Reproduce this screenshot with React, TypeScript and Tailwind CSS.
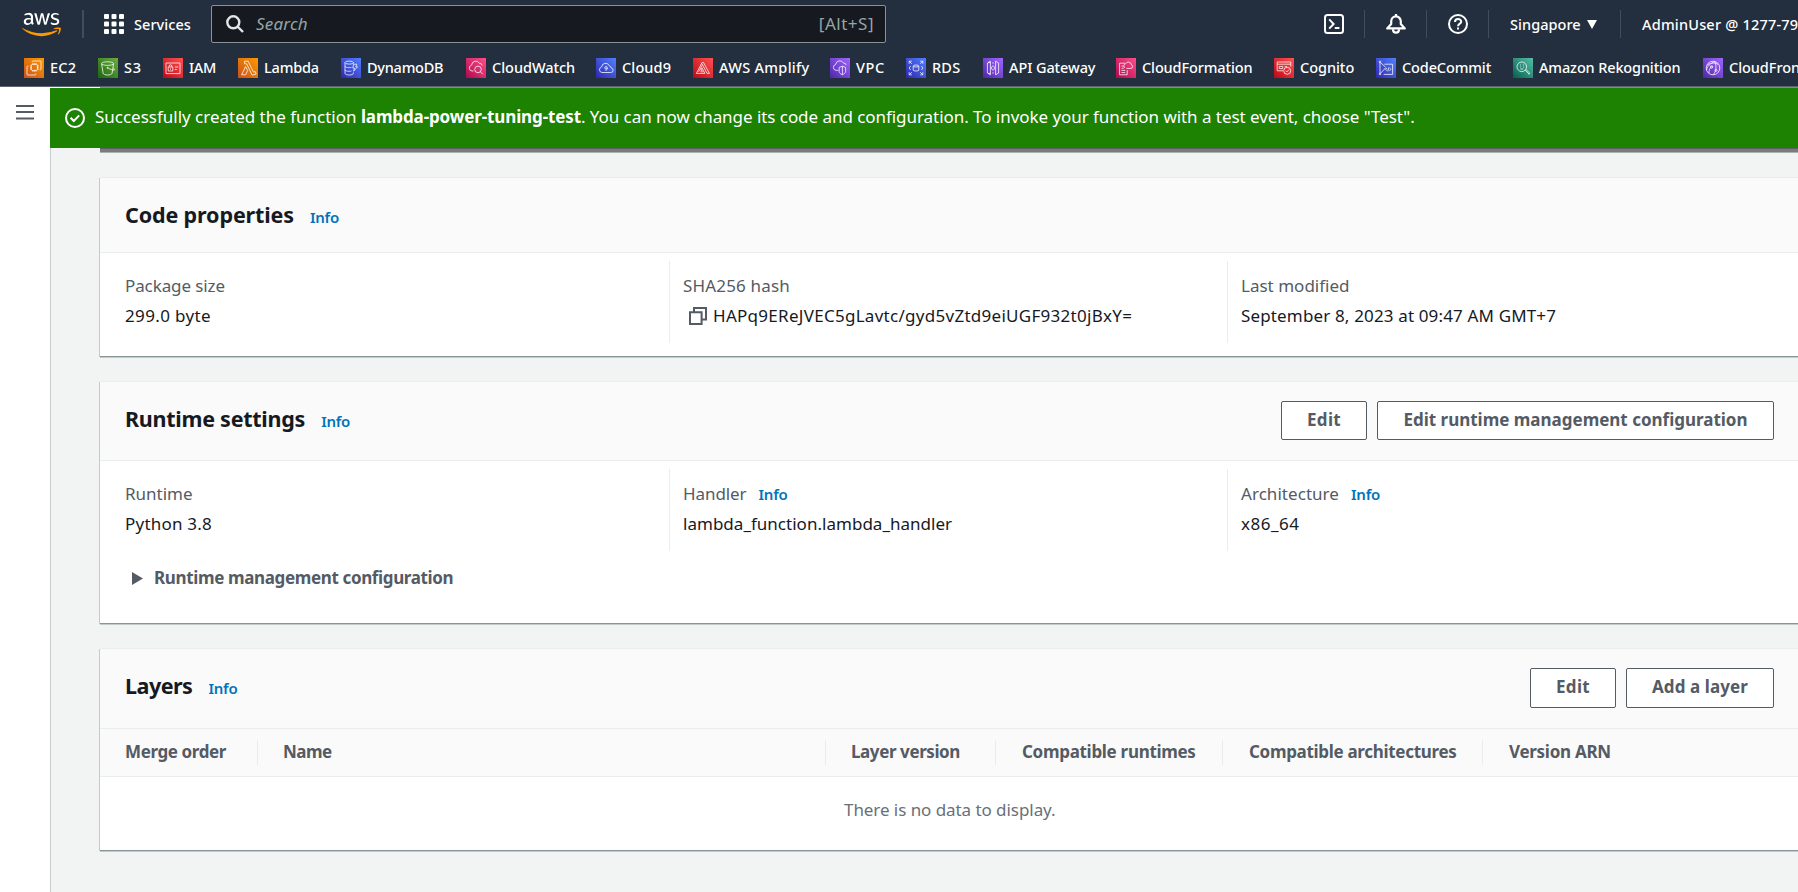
import type { ReactNode } from "react";
import { FaAws } from "react-icons/fa";

type Favorite = { name: string; slot: string; label: string; tile: string; glyph: ReactNode };

const ORANGE = "bg-[linear-gradient(45deg,#c8511b,#ff9900)]";
const GREEN = "bg-[linear-gradient(45deg,#1b660f,#6cae3e)]";
const RED = "bg-[linear-gradient(45deg,#bd0816,#ff5252)]";
const BLUE = "bg-[linear-gradient(45deg,#2e27ad,#527fff)]";
const PINK = "bg-[linear-gradient(45deg,#b0084d,#ff4f8b)]";
const PURPLE = "bg-[linear-gradient(45deg,#4d27a8,#a166ff)]";
const TEAL = "bg-[linear-gradient(45deg,#055f4e,#56c0a7)]";

const favorites: Favorite[] = [
  {
    name: "EC2", slot: "w-[74px]", label: "tracking-[0.25px]", tile: ORANGE,
    glyph: (
      <>
        <rect x="7.4" y="6.4" width="6" height="6" rx="0.8" />
        <path d="M8.8 6.4V5M10.4 6.4V5M12 6.4V5M8.8 13.8v-1.4M10.4 13.8v-1.4M12 13.8v-1.4M7.4 7.8H6M7.4 9.4H6M7.4 11H6M14.8 7.8h-1.4M14.8 9.4h-1.4M14.8 11h-1.4" />
        <path d="M8.2 4.2V3.6a.6.6 0 0 1 .6-.6h7.6a.6.6 0 0 1 .6.6v7.6a.6.6 0 0 1-.6.6h-.8M4.4 8.2h-.8a.6.6 0 0 0-.6.6v7.6a.6.6 0 0 0 .6.6h7.6a.6.6 0 0 0 .6-.6v-.8" />
      </>
    ),
  },
  {
    name: "S3", slot: "w-[65px]", label: "tracking-[0.7px]", tile: GREEN,
    glyph: (
      <>
        <ellipse cx="9.6" cy="5.6" rx="6" ry="1.8" />
        <path d="M3.6 5.8l1.5 9.4c.2 1.1 2.2 1.8 4.5 1.8s4.3-.7 4.5-1.8l1.5-9.4M9.6 9.8c2 1.2 5.2 2.5 6.6 2.3 1-.2-.1-1.5-1.2-2.3" />
        <circle cx="9.5" cy="9.8" r=".5" />
      </>
    ),
  },
  {
    name: "IAM", slot: "w-[75px]", label: "tracking-[-0.3px]", tile: RED,
    glyph: (
      <>
        <rect x="3" y="5" width="14" height="10.6" />
        <rect x="5.2" y="9" width="4.6" height="4" />
        <path d="M6.2 9V8a1.3 1.3 0 0 1 2.6 0v1M7.5 10.4v1.2M11.8 9h3.4M11.8 11.5h2" />
      </>
    ),
  },
  {
    name: "Lambda", slot: "w-[103px]", label: "tracking-[-0.2px]", tile: ORANGE,
    glyph: <path d="M3.6 16.8l4-8.2 2 4-2 4.2zM6.5 3.2h3.6l5.4 11 1.7-.7 1 2.4-3.2 1.1h-1L8.6 5.8H6.5z" />,
  },
  {
    name: "DynamoDB", slot: "w-[125px]", label: "tracking-[-0.25px]", tile: BLUE,
    glyph: (
      <>
        <ellipse cx="8.2" cy="4.6" rx="4.2" ry="1.5" />
        <path d="M4 4.6v10.8c0 .9 1.9 1.6 4.2 1.6s4.2-.7 4.2-1.6v-1M4 8.2c0 .9 1.9 1.5 4.2 1.5.9 0 1.6-.1 2.3-.3M4 11.8c0 .9 1.9 1.5 4.2 1.5.8 0 1.6-.1 2.2-.3M12.4 4.6v1M12.6 6.2h3.2l-1 2.6h1.7l-3.9 4.4.8-3.2h-1.6z" />
      </>
    ),
  },
  {
    name: "CloudWatch", slot: "w-[130px]", label: "tracking-[-0.03px]", tile: PINK,
    glyph: (
      <>
        <path d="M7.5 13H6a3 3 0 0 1-.4-5.900 4.200 4.200 0 0 1 7.900-1.700 2.300 2.300 0 0 1 2.600 2.100" />
        <circle cx="12" cy="11.4" r="3.3" />
        <path d="M14.3 13.7l2.6 2.6" />
      </>
    ),
  },
  {
    name: "Cloud9", slot: "w-[97px]", label: "tracking-[0.13px]", tile: BLUE,
    glyph: (
      <>
        <path d="M6 14.5a2.8 2.8 0 0 1-.4-5.5 4 4 0 0 1 7.7-1.2 2.5 2.5 0 0 1 1.9 2.3 2.2 2.2 0 0 1-.6 4.400z" />
        <path d="M11.3 9.8a1.3 1.2 0 1 1-2.6 0 1.3 1.2 0 0 1 2.6 0c0 1.4-.4 2.4-1.8 2.6" />
      </>
    ),
  },
  {
    name: "AWS Amplify", slot: "w-[137px]", label: "tracking-[0.3px]", tile: RED,
    glyph: <path d="M9 4.6L3.4 15.4h8.4L9 9.8 7.8 12.3h1.7M9 4.6h1.6l5.8 10.8H14L9 5.8M7.4 13.8h2.8M5.6 13.8L9 7.4" />,
  },
  {
    name: "VPC", slot: "w-[76px]", label: "tracking-[0.6px]", tile: PURPLE,
    glyph: (
      <>
        <path d="M8.5 12.3H6A2.9 2.9 0 0 1 5.6 6.6a4.2 4.2 0 0 1 7.9-1.5 2.3 2.3 0 0 1 2.6 2" />
        <path d="M12.4 8.2l3.2 1.2v4.2c0 1.4-1.8 2.6-3.2 3.2-1.4-.6-3.2-1.8-3.2-3.2V9.4zM12.4 8.2v8.6" />
      </>
    ),
  },
  {
    name: "RDS", slot: "w-[77px]", label: "tracking-[0.2px]", tile: BLUE,
    glyph: (
      <>
        <ellipse cx="10" cy="8" rx="2.8" ry="1" />
        <path d="M7.2 8v4c0 .6 1.3 1 2.8 1s2.8-.4 2.8-1V8M3.2 5.8V3.2h2.6M3.4 3.4l2.4 2.4M16.8 5.8V3.2h-2.6M16.6 3.4l-2.4 2.4M3.2 14.2v2.6h2.6M3.4 16.6l2.4-2.4M16.8 14.2v2.6h-2.6M16.6 16.6l-2.4-2.4M4.6 8L3.2 10l1.4 2M15.4 8l1.4 2-1.4 2" />
      </>
    ),
  },
  {
    name: "API Gateway", slot: "w-[133px]", label: "tracking-[-0.08px]", tile: PURPLE,
    glyph: <path d="M4.4 5v10l3 1.8V3.2zM7.4 4.6H5M7.4 15.4H5M15.6 5v10l-3 1.8V3.2zM9.6 7.6L8.4 10l1.2 2.4M10.4 7.6L11.6 10l-1.2 2.4M9.2 5h1.6M9.2 15h1.6" />,
  },
  {
    name: "CloudFormation", slot: "w-[158px]", label: "tracking-[-0.12px]", tile: PINK,
    glyph: (
      <>
        <path d="M9 5.2H3.6v11.6h7.6v-4.6M5.4 8h2.4M5.4 10.2h2.4M5.4 12.4h3.8M5.4 14.6h3.8" />
        <path d="M10.4 10.4h4.6a1.9 1.9 0 0 0 .3-3.7 3 3 0 0 0-5.7-.9 2.3 2.3 0 0 0-.6 4.200" />
      </>
    ),
  },
  {
    name: "Cognito", slot: "w-[102px]", label: "tracking-[-0.04px]", tile: RED,
    glyph: (
      <>
        <path d="M9 12.8H3.2V4h13.6v4.6M3.2 6.2h13.6M5.2 8.4h3.6v2.2H5.2zM10.6 8.6h2.4" />
        <circle cx="13.2" cy="12.8" r="3.5" />
        <path d="M11.6 12.8l1.2 1.2 2.2-2.4" />
      </>
    ),
  },
  {
    name: "CodeCommit", slot: "w-[137px]", label: "tracking-[-0.13px]", tile: BLUE,
    glyph: (
      <>
        <path d="M4 4v11.4M4.6 4.6l5 4.6M4.6 15.2l5-5.4M8.4 6.2h8.2v10.2H7.6" />
        <circle cx="4" cy="3.8" r=".8" />
        <circle cx="4" cy="16" r=".8" />
        <path d="M11 10l-1.4 1.4L11 12.8M13.6 10l1.4 1.4-1.4 1.4M12.8 9.4l-1 4" />
      </>
    ),
  },
  {
    name: "Amazon Rekognition", slot: "w-[190px]", label: "tracking-[-0.14px]", tile: TEAL,
    glyph: (
      <>
        <circle cx="8.8" cy="8.8" r="4.8" />
        <path d="M12.2 12.2l4 4M13 11.5l3.8 3.7-.9 1.2M7 7h.8M10 7h.8M7 9h.8M10 9h.8M7.4 11h2.8" />
      </>
    ),
  },
  {
    name: "CloudFront", slot: "w-[130px]", label: "tracking-[-0.05px]", tile: PURPLE,
    glyph: (
      <>
        <circle cx="10" cy="10" r="6.8" />
        <path d="M4 7.4c2.4-2.4 7.4-3.4 11-1M3.6 12.2c.6-4 3.4-6.6 8.4-8.6M10.2 16.6c3-3 3.6-8.4 1.6-13M6 15.2c-.4-2.6.8-5.6 3.4-7.2" />
        <circle cx="8.6" cy="9" r="1.2" />
        <circle cx="13" cy="12.4" r="1" />
      </>
    ),
  },
];

function Glyph({ children }: { children: ReactNode }) {
  return (
    <svg viewBox="0 0 20 20" className="size-5" fill="none" stroke="white" strokeWidth="0.8" strokeOpacity="0.95" strokeLinejoin="round">
      {children}
    </svg>
  );
}

function Separator({ className = "w-px" }: { className?: string }) {
  return <span className={`h-7 shrink-0 bg-[#414d5c] ${className}`} />;
}

function TopBar() {
  return (
    <header className="h-[87px] shrink-0 overflow-hidden border-b border-[#5c6370] bg-[#232f3e] text-[14.5px] font-medium whitespace-nowrap text-white">
      <div className="flex h-12 items-center">
        <div className="relative ml-[22px] h-[31px] w-[39px] shrink-0">
          <FaAws className="absolute inset-0 h-[31px] w-[39px] [clip-path:inset(0_0_44%_0)]" />
          <FaAws className="absolute inset-0 h-[31px] w-[39px] text-[#ff9900] [clip-path:inset(56%_0_0_0)]" />
        </div>
        <Separator className="ml-[21px] w-[2px]" />
        <svg viewBox="0 0 20 20" className="ml-5 size-5 shrink-0" fill="white">
          {[0, 7.5, 15].map((y) => [0, 7.5, 15].map((x) => <rect key={`${x}-${y}`} x={x} y={y} width="5" height="5" rx="1" />))}
        </svg>
        <span className="ml-[10px] w-[77px] shrink-0 pt-px tracking-[0.06px]">Services</span>
        <div className="flex h-[38px] w-[675px] shrink-0 items-center rounded-[2px] border border-[#879596] bg-[#16191f] pr-[11px] pl-[14px] text-[17px] font-normal text-[#95a5a6]">
          <svg viewBox="0 0 18 18" className="size-[18px]" fill="none" stroke="#e3e6e8" strokeWidth="2.4">
            <circle cx="7.3" cy="7.3" r="6" />
            <path d="M11.5 11.5l5.5 5.5" />
          </svg>
          <span className="ml-3 grow tracking-[0.2px] italic">Search</span>
          <span className="tracking-[0.5px]">[Alt+S]</span>
        </div>
        <svg viewBox="0 0 20 20" className="ml-[438px] size-5 shrink-0" fill="none" stroke="white" strokeWidth="2">
          <rect x="1" y="1" width="18" height="18" rx="2.5" />
          <path d="M5.2 5.4l4.4 4.6-4.4 4.6M10.8 14h4.6" />
        </svg>
        <Separator className="ml-5 w-px" />
        <svg viewBox="0 0 20 20" className="ml-[21px] size-5 shrink-0" fill="none" stroke="white" strokeWidth="2.2" strokeLinejoin="round">
          <path d="M1.2 14.4h17.6L14.8 10V7.6C14.8 4.600 12.600 2.400 10 2.400S5.200 4.600 5.200 7.600V10z" />
          <path d="M10 0v2.6M7 15.200c0 4.600 6 4.600 6 0" />
        </svg>
        <Separator className="ml-5 w-px" />
        <svg viewBox="0 0 20 20" className="ml-[21px] size-5 shrink-0" fill="none" stroke="white" strokeWidth="2">
          <circle cx="10" cy="10" r="9" />
          <path d="M7 8c0-4 6.2-3.800 6.200-.3 0 2-3.200 2-3.200 4.600M10 13.400v2.200" />
        </svg>
        <Separator className="ml-5 w-px" />
        <span className="ml-[21px] w-[77px] shrink-0 pt-px tracking-[0.05px]">Singapore</span>
        <svg viewBox="0 0 10 9" className="h-[9px] w-[10px] shrink-0" fill="white">
          <path d="M0 0h10L5 9z" />
        </svg>
        <Separator className="ml-[23px] w-px" />
        <span className="ml-[21px] pt-px tracking-[0.2px]">AdminUser @ 1277-79</span>
      </div>
      <nav className="flex h-10 items-center pl-6">
        {favorites.map((f) => (
          <a key={f.name} className={`flex shrink-0 items-center gap-[6px] ${f.slot}`}>
            <span className={`size-5 shrink-0 ${f.tile}`}>
              <Glyph>{f.glyph}</Glyph>
            </span>
            <span className={f.label}>{f.name}</span>
          </a>
        ))}
      </nav>
    </header>
  );
}

function Info() {
  return <a className="text-[15px] font-semibold tracking-[-0.24px] text-[#0073bb]">Info</a>;
}

function Button({ children, className }: { children: ReactNode; className: string }) {
  return (
    <button className={`flex shrink-0 justify-center rounded-[2px] border border-[#545b64] bg-white text-[17px] leading-[36px] font-bold text-[#545b64] ${className}`}>
      {children}
    </button>
  );
}

type CardProps = {
  title: string;
  titleClass: string;
  headClass: string;
  className: string;
  actions?: ReactNode;
  children: ReactNode;
};

function Card({ title, titleClass, headClass, className, actions, children }: CardProps) {
  return (
    <section className={`flex w-[1720px] shrink-0 flex-col border-t border-[#eaeded] bg-white shadow-[0_1px_0_#879596,0_2px_0_#c3cacb,-1px_1px_0_#c5cbcc] ${className}`}>
      <div className={`flex shrink-0 items-start border-b border-[#eaeded] bg-[#fafafa] pl-[25px] ${headClass}`}>
        <div className="flex w-[1649px] items-start justify-between">
          <h2 className="flex items-baseline gap-4 pt-[22px] text-[21.5px] leading-[30px] font-bold text-[#16191f]">
            <span className={titleClass}>{title}</span>
            <Info />
          </h2>
          <div className="flex gap-[10px] pt-[19px]">{actions}</div>
        </div>
      </div>
      {children}
    </section>
  );
}

type FieldProps = { label: string; labelClass: string; info?: boolean; first?: boolean; children: ReactNode };

function Field({ label, labelClass, info, first, children }: FieldProps) {
  return (
    <div className={`h-[82px] w-[558px] shrink-0 border-l pt-[10px] pl-[13px] text-[17px] leading-[30px] text-[#16191f] ${first ? "border-transparent" : "border-[#eaeded]"}`}>
      <div className="flex items-baseline gap-3 text-[#545b64]">
        <span className={labelClass}>{label}</span>
        {info && <Info />}
      </div>
      <div className="flex items-center">{children}</div>
    </div>
  );
}

const columns = [
  { name: "Merge order", box: "w-[158px] pl-[25px]", text: "tracking-[-0.39px]" },
  { name: "Name", box: "w-[568px] pl-[25px]", text: "tracking-[-0.56px]" },
  { name: "Layer version", box: "w-[170px] pl-[25px]", text: "tracking-[-0.41px]" },
  { name: "Compatible runtimes", box: "w-[227px] pl-[26px]", text: "tracking-[-0.3px]" },
  { name: "Compatible architectures", box: "w-[260px] pl-[26px]", text: "tracking-[-0.31px]" },
  { name: "Version ARN", box: "grow pl-[26px]", text: "tracking-[-0.28px]" },
];

export default function App() {
  return (
    <div className="flex h-[892px] w-[1798px] flex-col overflow-hidden bg-white font-['Noto_Sans',sans-serif]">
      <TopBar />
      <div className="flex min-h-0 grow">
        <aside className="w-[50px] shrink-0 bg-white pt-[17px] pl-4">
          <svg viewBox="0 0 18 16" className="h-4 w-[18px]" fill="none" stroke="#545b64" strokeWidth="2">
            <path d="M0 2h18M0 8h18M0 14.5h18" />
          </svg>
        </aside>
        <main className="flex min-w-0 grow flex-col overflow-hidden">
          <div className="ml-[50px] h-px shrink-0 bg-[#8a8a8a]" />
          <div className="flex h-[60px] shrink-0 items-center bg-[#1d8102] pl-[15px] text-[17px] whitespace-pre text-white">
            <svg viewBox="0 0 20 20" className="mr-[10px] size-5 shrink-0" fill="none" stroke="white" strokeWidth="2">
              <circle cx="10" cy="10" r="9" />
              <path d="M5.6 9.8l3.2 3.2 5.4-5.6" />
            </svg>
            <p className="pb-[2px]">
              <span className="tracking-[-0.01px]">Successfully created the function </span>
              <b className="font-bold tracking-[-0.12px]">lambda-power-tuning-test</b>
              <span className="tracking-[-0.05px]">. You can now change its code and configuration. To invoke your function with a test event, choose "Test".</span>
            </p>
          </div>

          <div className="flex grow flex-col border-l border-[#c6cccd] bg-[#f2f3f3] pl-[49px]">
            <div className="h-[5px] shrink-0 border-t border-b border-t-[#5b6168] border-b-[#a9b1b3] bg-[#7b7b7b]" />
            <div className="flex flex-col gap-[25px] pt-[24px]">
              <Card title="Code properties" titleClass="tracking-[-0.13px]" headClass="h-[75px]" className="h-[179px]">
                <div className="flex pt-2 pl-[11px]">
                  <Field first label="Package size" labelClass="tracking-[-0.1px]">
                    <span className="tracking-[0.36px]">299.0 byte</span>
                  </Field>
                  <Field label="SHA256 hash" labelClass="tracking-[0.17px]">
                    <svg viewBox="0 0 18 18" className="mr-[6px] ml-[6px] size-[18px]" fill="none" stroke="#545b64" strokeWidth="2">
                      <path d="M1 5.2h11.6V17H1z" />
                      <path d="M5 5V1h12v11.6h-4" />
                    </svg>
                    <span className="tracking-[0.28px]">HAPq9EReJVEC5gLavtc/gyd5vZtd9eiUGF932t0jBxY=</span>
                  </Field>
                  <Field label="Last modified" labelClass="tracking-[0.01px]">
                    <span className="tracking-[0.15px]">September 8, 2023 at 09:47 AM GMT+7</span>
                  </Field>
                </div>
              </Card>

              <Card
                title="Runtime settings"
                titleClass="tracking-[-0.26px]"
                headClass="h-[79px]"
                className="h-[242px]"
                actions={
                  <>
                    <Button className="h-[39px] w-[86px] tracking-[0.32px]">Edit</Button>
                    <Button className="h-[39px] w-[397px] tracking-[-0.01px]">Edit runtime management configuration</Button>
                  </>
                }
              >
                <div className="flex pt-2 pl-[11px]">
                  <Field first label="Runtime" labelClass="tracking-[-0.01px]">
                    <span className="tracking-[0.22px]">Python 3.8</span>
                  </Field>
                  <Field info label="Handler" labelClass="tracking-[-0.08px]">
                    <span className="tracking-[0.02px]">lambda_function.lambda_handler</span>
                  </Field>
                  <Field info label="Architecture" labelClass="tracking-[0.05px]">
                    <span className="tracking-[0.5px]">x86_64</span>
                  </Field>
                </div>
                <div className="flex items-center pt-[15px] pl-[32px] text-[17px] leading-6 font-bold tracking-[-0.36px] text-[#545b64]">
                  <svg viewBox="0 0 11 13" className="mt-px mr-[11px] h-[13px] w-[11px]" fill="#545b64">
                    <path d="M0 0l11 6.5L0 13z" />
                  </svg>
                  Runtime management configuration
                </div>
              </Card>

              <Card
                title="Layers"
                titleClass="tracking-[-0.5px]"
                headClass="h-[80px]"
                className="h-[202px]"
                actions={
                  <>
                    <Button className="h-10 w-[86px] tracking-[0.32px]">Edit</Button>
                    <Button className="h-10 w-[148px] tracking-[0.09px]">Add a layer</Button>
                  </>
                }
              >
                <div className="flex h-12 shrink-0 items-center border-b border-[#eaeded] bg-[#fafafa] text-[17px] leading-[24px] font-bold text-[#545b64]">
                  {columns.map((c, i) => (
                    <div key={c.name} className={`h-[25px] shrink-0 ${c.box} ${i < columns.length - 1 ? "border-r border-[#eaeded]" : ""}`}>
                      <span className={c.text}>{c.name}</span>
                    </div>
                  ))}
                </div>
                <p className="pt-[21px] pl-[744px] text-[17px] leading-6 tracking-[-0.06px] text-[#687078]">There is no data to display.</p>
              </Card>
            </div>
          </div>
        </main>
      </div>
    </div>
  );
}
